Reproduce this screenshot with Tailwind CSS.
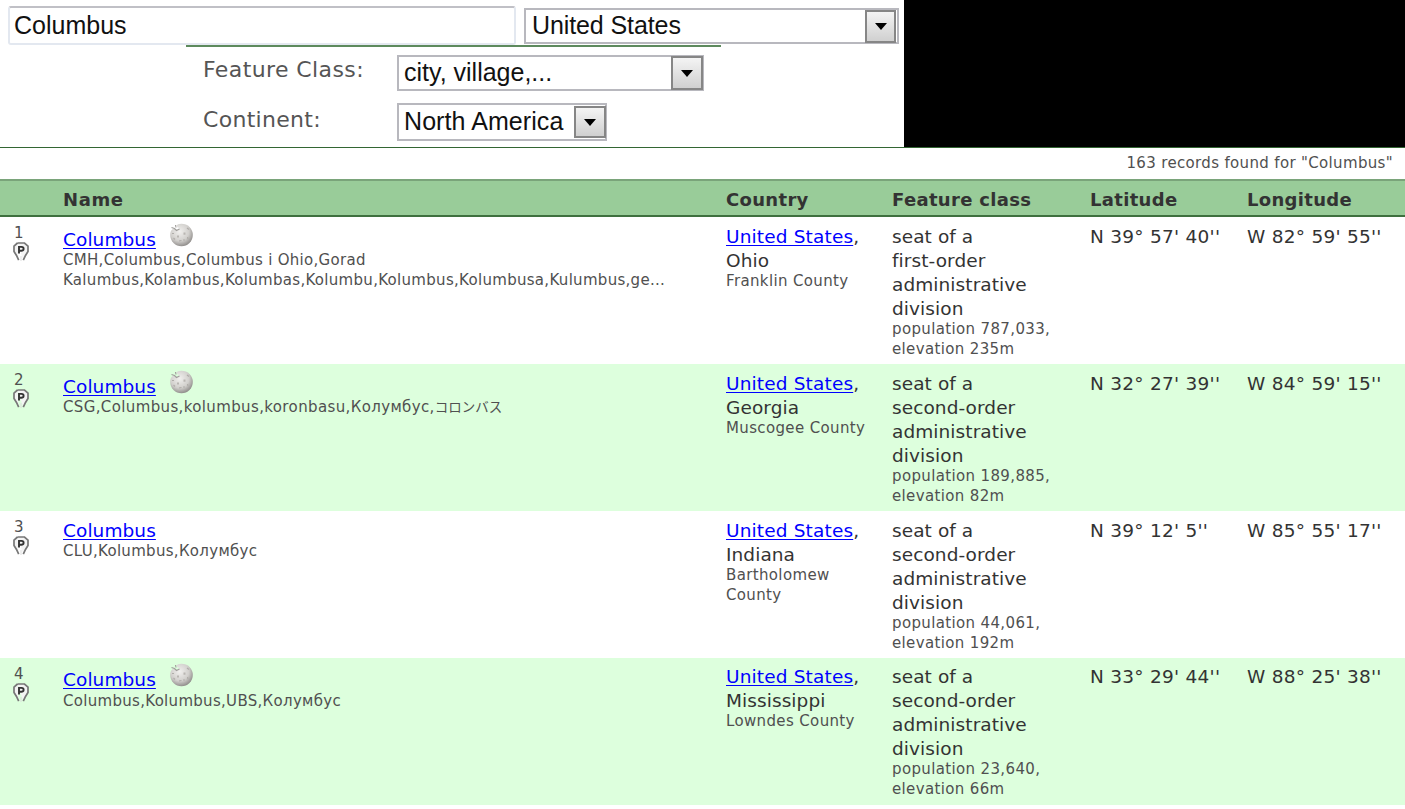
<!DOCTYPE html>
<html><head><meta charset="utf-8"><title>Search</title>
<script src="https://cdn.jsdelivr.net/npm/@tailwindcss/browser@4"></script></head>
<body class="bg-white w-[1405px] h-[809px] overflow-hidden font-['DejaVu_Sans','Noto_Sans_CJK_JP',sans-serif] text-[#333]">
<svg class="absolute w-0 h-0">
<defs><radialGradient id="g" cx=".42" cy=".35" r=".68"><stop offset="0" stop-color="#f1f0ee"/><stop offset=".6" stop-color="#d2d0cd"/><stop offset="1" stop-color="#8b8886"/></radialGradient></defs>
<symbol id="globe" viewBox="0 0 24 24"><circle cx="12.500" cy="12" r="11.300" fill="url(#g)"/><path d="M0 0H11L7.500 2L8.500 4.500L10.500 5L8 7L4.500 5.500L1.500 8L0 9Z" fill="var(--bg)"/><path d="M2.500 4.500l3 1 2 2 3-1.500M6.500 2l.5 2.500" fill="none" stroke="#a19f9c" stroke-width="1.200"/><path d="M8 12.500h2v2h-2zM14.500 9.500h2v2.200h-2z" fill="#b9b6b2"/><path d="M10 18l2.500-.5M18 5l2 1.500M4.500 15l1.500 1.500M18.500 14l.5 2M3 10.500h2M14 17h2" fill="none" stroke="#b0ada9" stroke-width="1.200"/></symbol>
<symbol id="pin" viewBox="0 0 16 20"><path d="M4.500 1H11.500L15 4.200V9.500L12.500 13.500L10.300 18.200M5.700 18.200L3.500 13.500L1 9.500V4.200L4.500 1" fill="#f4f4f4" stroke="#777" stroke-width="1.700"/><path d="M8 14V19" stroke="#ddd" stroke-width="1"/><path d="M6 11.500V4.900H8.500Q10.800 5 10.600 7Q10.500 8.700 8.300 8.700H6" fill="none" stroke="#333" stroke-width="1.900"/></symbol>
</svg>
<header class="flex h-[147px]">
<form class="relative w-[904px] h-[147px] font-['Liberation_Sans',sans-serif] text-[25px] text-[#111]">
<div class="flex pl-2 pt-[6px] gap-[8px]">
<div class="w-[508px] h-[39px] border-2 border-[#e3e8f0] border-t-[#c0c0c6] rounded-[3px] flex items-center pl-[4px]">Columbus</div>
<div class="w-[375px] h-[36px] mt-[2px] border-2 border-[#b8b8be] flex items-center justify-between pl-[6px] pr-[1px]"><span class="tracking-[-0.1px]">United States</span><i class="w-[31px] h-[33px] border-2 border-[#868686] bg-linear-to-b from-[#f4f4f4] to-[#d0d0d0] flex items-center justify-center"><svg width="12" height="7"><path d="M0 0H12L6 7Z"/></svg></i></div>
</div>
<div class="absolute left-[186px] top-[45px] w-[535px] h-[2px] bg-[#5d8a5d]"></div>
<div class="flex pl-[203px] mt-[10px]"><label class="w-[194px] font-['DejaVu_Sans',sans-serif] text-[22px] text-[#555] leading-[29px] tracking-[.4px]">Feature Class:</label>
<div class="w-[307px] h-[36px] border-2 border-[#b8b8be] flex items-center justify-between pl-[5px]"><span>city, village,...</span><i class="w-[32px] h-[34px] -mr-px border-2 border-[#868686] bg-linear-to-b from-[#f4f4f4] to-[#d0d0d0] flex items-center justify-center"><svg width="12" height="7"><path d="M0 0H12L6 7Z"/></svg></i></div></div>
<div class="flex pl-[203px] mt-[12px]"><label class="w-[194px] font-['DejaVu_Sans',sans-serif] text-[22px] text-[#555] leading-[33px] tracking-[.3px]">Continent:</label>
<div class="w-[210px] h-[38px] border-2 border-[#b8b8be] flex items-center justify-between pl-[5px]"><span class="tracking-[.08px]">North America</span><i class="w-[32px] h-[32px] -mr-px border-2 border-[#868686] bg-linear-to-b from-[#f4f4f4] to-[#d0d0d0] flex items-center justify-center"><svg width="12" height="7"><path d="M0 0H12L6 7Z"/></svg></i></div></div>
</form>
<div class="flex-1 bg-black"></div>
</header>
<div class="h-[32px] border-t border-[#336633] text-right pr-[12px] text-[15px] leading-[31px] tracking-[.34px] text-[#505050]">163 records found for "Columbus"</div>
<div class="grid grid-cols-[63px_663px_166px_198px_157px_1fr] h-[38px] bg-[#9c9] border-t-2 border-b-2 border-t-[#7aa47a] border-b-[#3f703f] text-[18px] leading-[37px] tracking-[.32px]">
<b></b><b class="tracking-[.6px]">Name</b><b>Country</b><b>Feature class</b><b>Latitude</b><b>Longitude</b></div>
<main id="rows"></main>
<template id="row"><section class="grid grid-cols-[63px_663px_166px_198px_157px_1fr] h-[147px] pt-[7px] text-[18.500px] leading-[24px] tracking-[.08px]">
<div class="pl-[13px] text-[15px] leading-[18px] text-[#505050]"><div class="num pl-px"></div><svg class="w-4 h-5 block"><use href="#pin"/></svg></div>
<div class="name-cell pt-px"><div class="name flex"><a class="text-[#00f] underline underline-offset-2">Columbus</a><svg class="globe w-6 h-6 ml-[13px] -mt-[5px]"><use href="#globe"/></svg></div><div class="alt text-[15px] leading-[20px] tracking-[.3px] text-[#505050] -mt-[2px] whitespace-pre-line"></div></div>
<div class="shift pt-px"><a class="text-[#00f] underline underline-offset-2 tracking-[.15px]">United States</a>,<div class="state"></div><div class="county text-[15px] leading-[20px] tracking-[.36px] text-[#505050] -mt-[2px] pr-6"></div></div>
<div class="shift pt-px"><div class="cls whitespace-pre-line"></div><div class="pop text-[15px] leading-[20px] tracking-[.36px] text-[#505050] -mt-[2px] whitespace-pre-line"></div></div>
<div class="lat shift pt-px tracking-[.26px]"></div><div class="lon shift pt-px tracking-[.26px]"></div></section></template>
<script>
const D=[["CMH,Columbus,Columbus i Ohio,Gorad\nKalumbus,Kolambus,Kolumbas,Kolumbu,Kolumbus,Kolumbusa,Kulumbus,ge...","Ohio","Franklin County","first","787,033","235","N 39° 57' 40''","W 82° 59' 55''",1],
["CSG,Columbus,kolumbus,koronbasu,Колумбус,","Georgia","Muscogee County","second","189,885","82","N 32° 27' 39''","W 84° 59' 15''",1,"コロンバス"],
["CLU,Kolumbus,Колумбус","Indiana","Bartholomew County","second","44,061","192","N 39° 12' 5''","W 85° 55' 17''",0],
["Columbus,Kolumbus,UBS,Колумбус","Mississippi","Lowndes County","second","23,640","66","N 33° 29' 44''","W 88° 25' 38''",1]];
D.forEach((d,i)=>{const n=document.getElementById('row').content.cloneNode(true),s=n.firstElementChild,q=(c,t)=>s.querySelector(c).textContent=t;
q('.num',i+1);q('.alt',d[0]);q('.state',d[1]);q('.county',d[2]);q('.cls','seat of a\n'+d[3]+'-order\nadministrative\ndivision');q('.pop','population '+d[4]+',\nelevation '+d[5]+'m');q('.lat',d[6]);q('.lon',d[7]);
if(d[9]){s.querySelector('.alt').classList.replace('tracking-[.3px]','tracking-[.37px]');const j=document.createElement('span');j.className='text-[13.500px] leading-none tracking-normal';j.textContent=d[9];s.querySelector('.alt').append(j)}
if(i%2)s.classList.add('bg-[#dfd]');s.style.setProperty('--bg',i%2?'#dfd':'#fff');
if(i===3){s.querySelectorAll('.shift').forEach(e=>e.classList.replace('pt-px','pt-0'));s.querySelector('.name-cell').classList.replace('pt-px','pt-0');s.querySelector('.alt').classList.replace('-mt-[2px]','-mt-px')}
if(d[8])s.querySelector('.name').classList.add('pt-[3px]');else s.querySelector('.globe').remove();
document.getElementById('rows').append(n)});
</script></body></html>
